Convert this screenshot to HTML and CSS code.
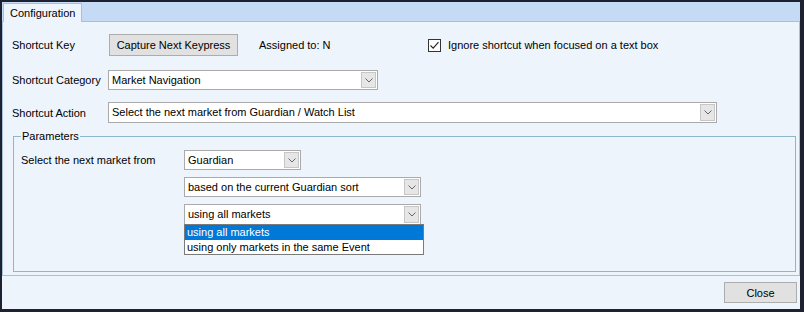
FILE: index.html
```html
<!DOCTYPE html>
<html lang="en">
<head>
    <meta charset="UTF-8">
    <title>Configuration</title>
    <link rel="stylesheet" href="styles.css">
</head>
<body>
    <div class="window">
        <div class="tabstrip">
            <div class="tab">Configuration</div>
        </div>

        <div class="tabpage">
            <div class="row row-key">
                <span class="label">Shortcut Key</span>
                <button class="btn capture">Capture Next Keypress</button>
                <span class="assigned">Assigned to: N</span>
                <label class="check">
                    <span class="box">
                        <svg width="11" height="11" viewBox="0 0 11 11"><polyline points="1.5,5.5 4.2,8.2 9.5,2.2" fill="none" stroke="#222" stroke-width="1.1"/></svg>
                    </span>
                    Ignore shortcut when focused on a text box
                </label>
            </div>

            <div class="row row-category">
                <span class="label">Shortcut Category</span>
                <div class="combo combo-category">
                    <span class="value">Market Navigation</span>
                    <span class="arrow"><svg width="8" height="5" viewBox="0 0 8 5"><polyline points="0.5,0.5 4,4 7.5,0.5" fill="none" stroke="#666" stroke-width="1"/></svg></span>
                </div>
            </div>

            <div class="row row-action">
                <span class="label">Shortcut Action</span>
                <div class="combo combo-action">
                    <span class="value">Select the next market from Guardian / Watch List</span>
                    <span class="arrow"><svg width="8" height="5" viewBox="0 0 8 5"><polyline points="0.5,0.5 4,4 7.5,0.5" fill="none" stroke="#666" stroke-width="1"/></svg></span>
                </div>
            </div>

            <fieldset class="params">
                <legend>Parameters</legend>

                <div class="prow prow-source">
                    <span class="plabel">Select the next market from</span>
                    <div class="combo combo-source">
                        <span class="value">Guardian</span>
                        <span class="arrow"><svg width="8" height="5" viewBox="0 0 8 5"><polyline points="0.5,0.5 4,4 7.5,0.5" fill="none" stroke="#666" stroke-width="1"/></svg></span>
                    </div>
                </div>

                <div class="prow prow-indent">
                    <div class="combo combo-wide">
                        <span class="value">based on the current Guardian sort</span>
                        <span class="arrow"><svg width="8" height="5" viewBox="0 0 8 5"><polyline points="0.5,0.5 4,4 7.5,0.5" fill="none" stroke="#666" stroke-width="1"/></svg></span>
                    </div>
                </div>

                <div class="prow prow-indent">
                    <div class="combo combo-wide combo-open">
                        <span class="value">using all markets</span>
                        <span class="arrow"><svg width="8" height="5" viewBox="0 0 8 5"><polyline points="0.5,0.5 4,4 7.5,0.5" fill="none" stroke="#666" stroke-width="1"/></svg></span>
                        <ul class="droplist">
                            <li class="selected">using all markets</li>
                            <li>using only markets in the same Event</li>
                        </ul>
                    </div>
                </div>
            </fieldset>
        </div>

        <div class="footer">
            <button class="btn close">Close</button>
        </div>
    </div>
</body>
</html>
```

FILE: styles.css
```css
* {
    box-sizing: border-box;
    margin: 0;
    padding: 0;
}

body {
    font-family: "Liberation Sans", Arial, sans-serif;
    font-size: 11px;
    color: #000;
    background-color: #eef4fc;
}

.window {
    width: 804px;
    height: 312px;
    border: solid #1e2230;
    border-width: 2px 4px 3px 2px;
    background-color: #eef4fc;
    display: flex;
    flex-direction: column;
}

/* tab header */
.tabstrip {
    height: 20px;
    flex: none;
    background-color: #c5daf5;
    border-bottom: 1px solid #a7c0db;
    padding-left: 1px;
    display: flex;
    align-items: flex-end;
}

.tab {
    position: relative;
    height: 19px;
    margin-bottom: -1px;
    padding: 0 6px;
    line-height: 18px;
    background-color: #eef4fc;
    border: 1px solid #a7c0db;
    border-bottom: none;
}

.tabpage {
    height: 254px;
    flex: none;
    border: 1px solid #a7c0db;
    border-top: none;
    padding: 12px 0 3px 9px;
    display: flex;
    flex-direction: column;
}

.row {
    display: flex;
    align-items: center;
}

.label {
    width: 96px;
    flex: none;
}

.row-key {
    height: 22px;
}

.row-category {
    margin-top: 14px;
}

.row-action {
    margin-top: 12px;
}

.btn {
    font-family: inherit;
    font-size: 11px;
    color: #000;
    background-color: #e1e1e1;
    border: 1px solid #adadad;
}

.capture {
    width: 129px;
    height: 22px;
    margin-left: 1px;
}

.assigned {
    width: 169px;
    margin-left: 21px;
}

.check {
    display: flex;
    align-items: center;
}

.box {
    width: 13px;
    height: 13px;
    border: 1px solid #333;
    background-color: #fff;
    margin-right: 7px;
    display: flex;
    align-items: center;
    justify-content: center;
}

/* combo boxes */
.combo {
    position: relative;
    height: 20px;
    display: flex;
    align-items: stretch;
    background-color: #fff;
    border: 1px solid #aaa;
    padding: 1px 1px 1px 3px;
}

.combo .value {
    flex: 1;
    line-height: 16px;
    white-space: nowrap;
    overflow: hidden;
}

.combo .arrow {
    width: 15px;
    flex: none;
    background-color: #e6e6e6;
    border: 1px solid #c6c6c6;
    display: flex;
    align-items: center;
    justify-content: center;
}

.combo-category {
    width: 270px;
}

.combo-action {
    width: 609px;
    height: 21px;
}

.params {
    flex: 1;
    margin: 6px 3px 0 1px;
    border: 1px solid #91b6cc;
    padding: 0 7px;
}

.params legend {
    padding: 0 1px;
    line-height: 14px;
}

.prow {
    display: flex;
    align-items: center;
    margin-top: 7px;
}

.plabel {
    width: 163px;
    flex: none;
}

.prow-indent {
    padding-left: 163px;
}

.combo-source {
    width: 117px;
}

.combo-wide {
    width: 237px;
}

.combo-open {
    height: 21px;
}

.droplist {
    position: absolute;
    top: 100%;
    left: -1px;
    width: 240px;
    list-style: none;
    background-color: #fff;
    border: 1px solid #7a7a7a;
}

.droplist li {
    height: 14px;
    line-height: 14px;
    padding-left: 2px;
    white-space: nowrap;
}

.droplist li.selected {
    background-color: #0078d7;
    color: #fff;
    height: 15px;
}

.footer {
    flex: 1;
    display: flex;
    justify-content: flex-end;
    align-items: flex-start;
    padding: 6px 3px 0 0;
}

.close {
    width: 73px;
    height: 21px;
}
```
